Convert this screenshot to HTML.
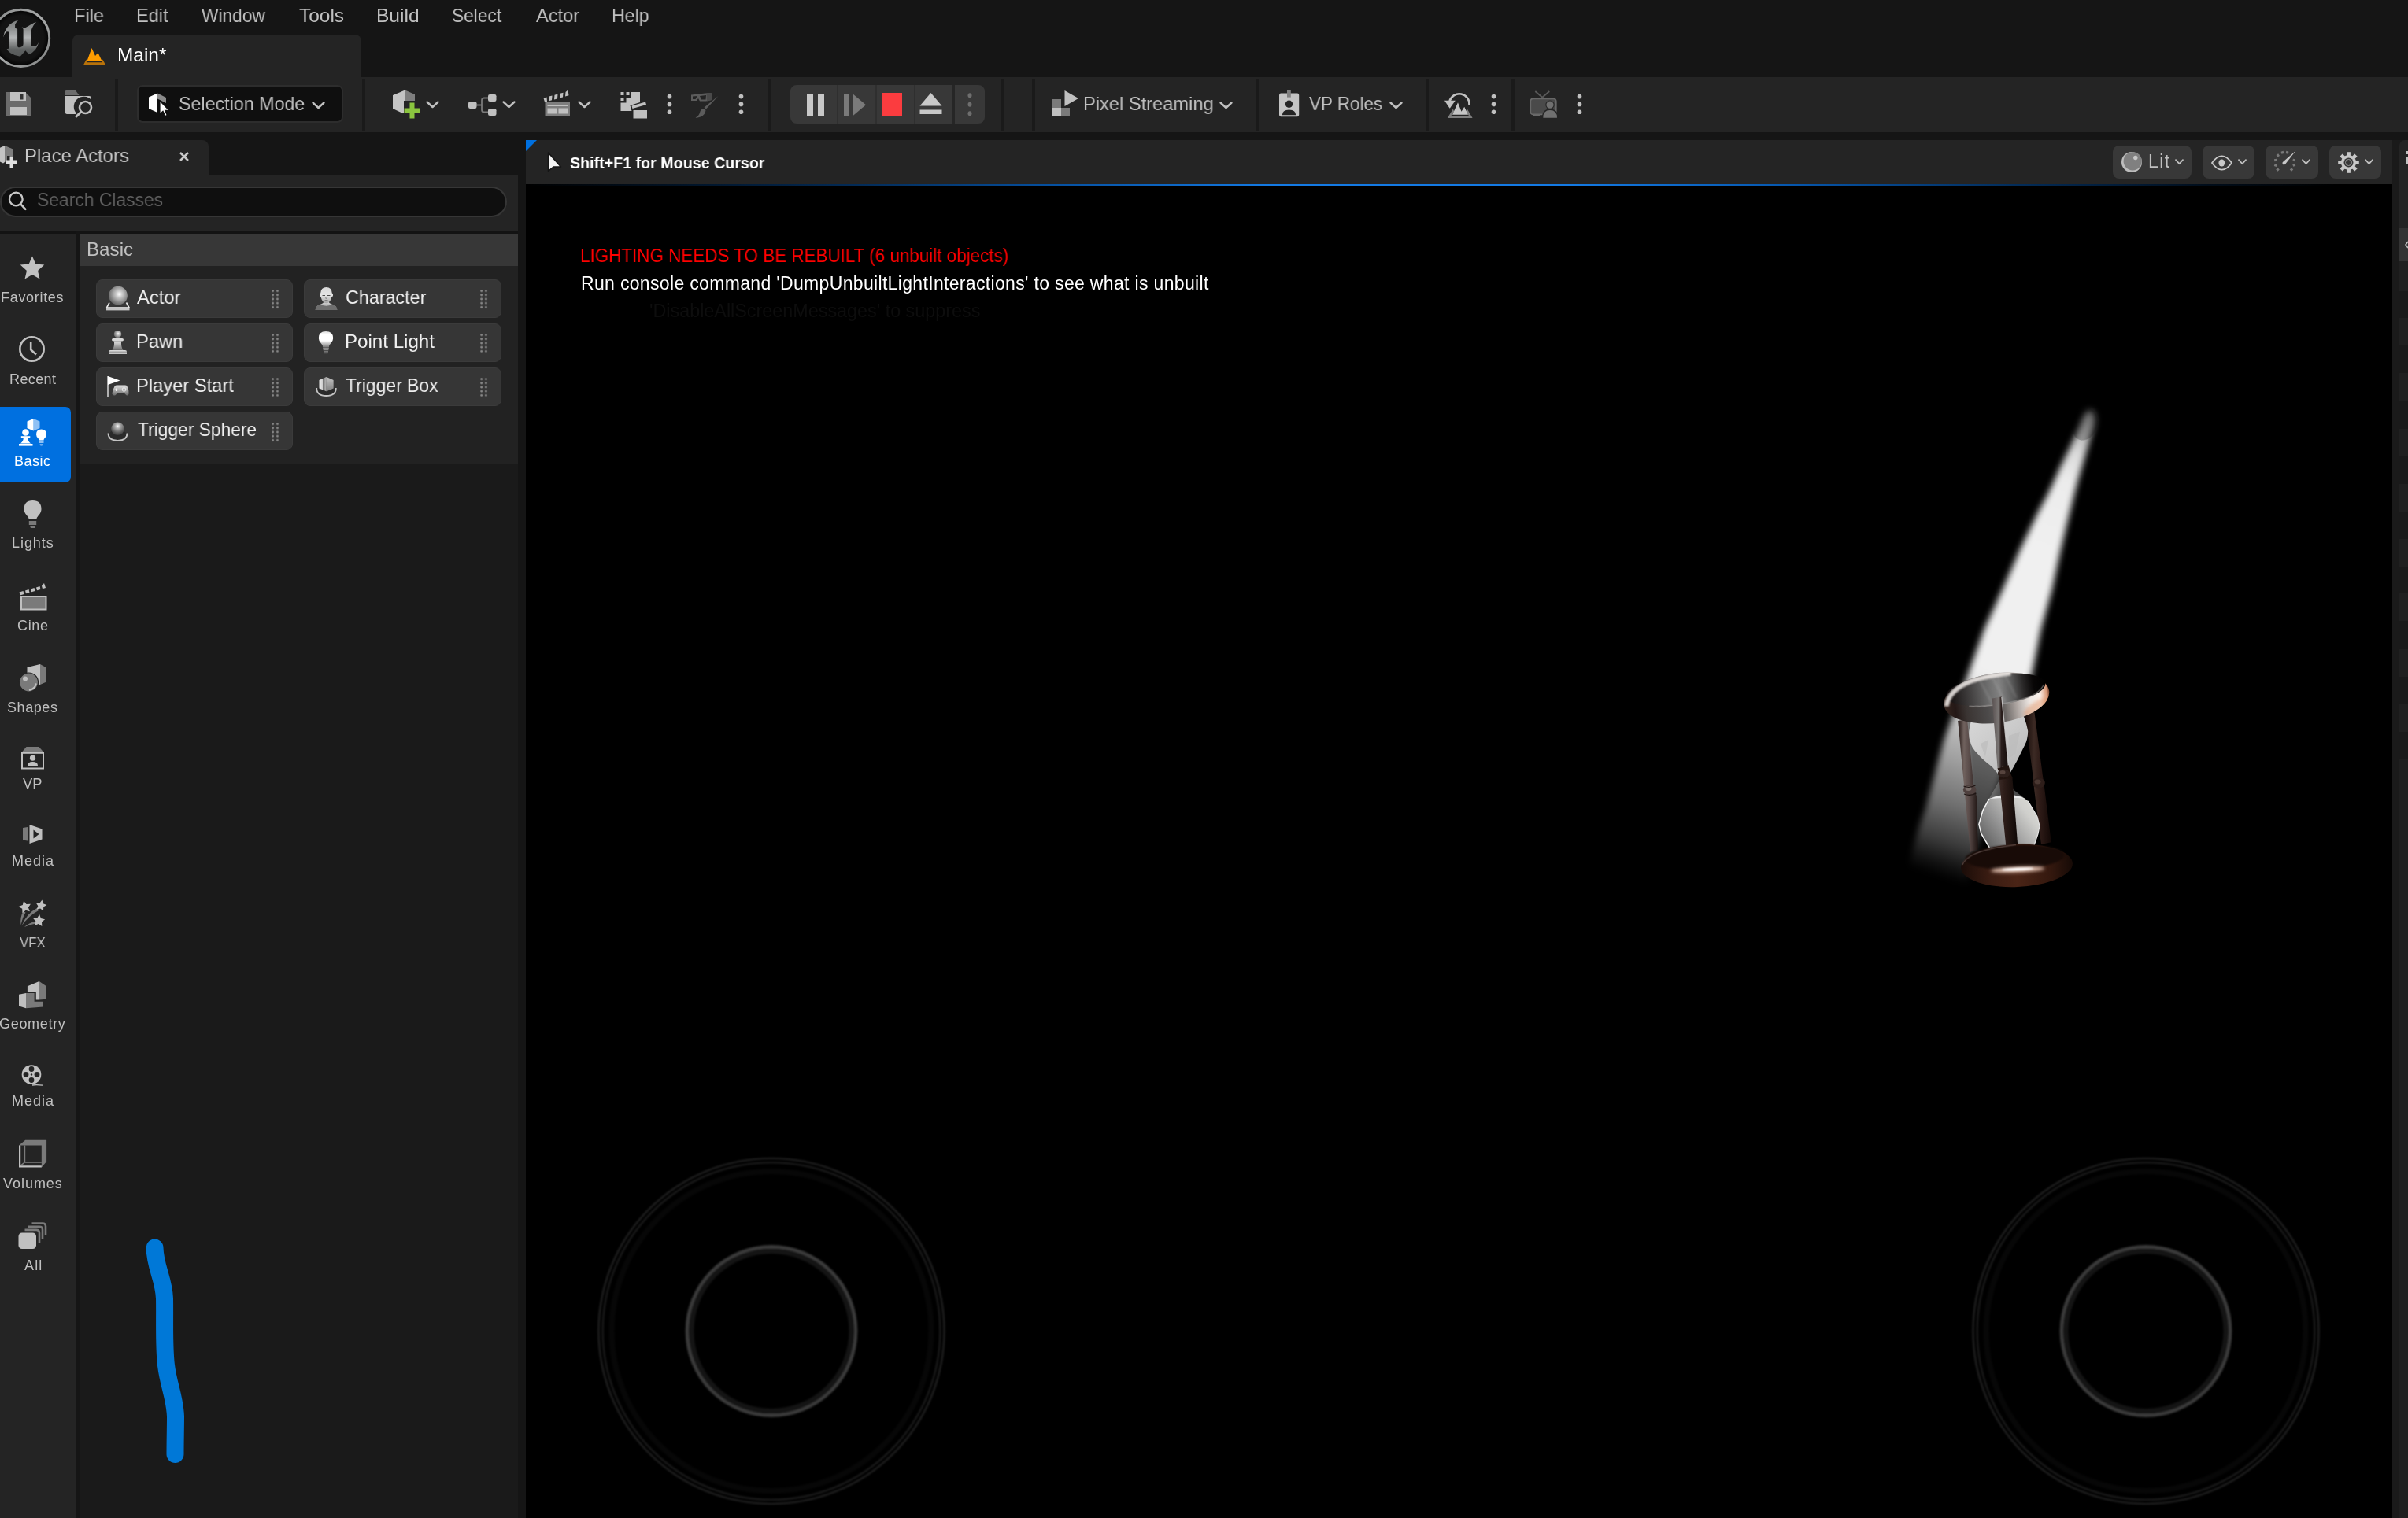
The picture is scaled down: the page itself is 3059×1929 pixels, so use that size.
<!DOCTYPE html>
<html>
<head>
<meta charset="utf-8">
<title>Unreal Editor</title>
<style>
*{box-sizing:border-box;margin:0;padding:0}
html,body{width:3059px;height:1929px;overflow:hidden;background:#151515}
body{position:relative;font-family:"Liberation Sans",sans-serif;color:#c0c0c0}
.a{position:absolute}
.t{position:absolute;white-space:nowrap;line-height:1;transform-origin:0 0;will-change:transform}
svg{position:absolute;overflow:visible;display:block}
.sep{position:absolute;width:4px;top:99.500px;height:66px;background:#1a1a1a}
.item{position:absolute;height:48.500px;background:#363636;border:1px solid #3b3b3b;border-radius:8px}
.grip{position:absolute;width:9.500px;height:26px;background:radial-gradient(circle at 1.600px 1.600px,#868686 .9px,rgba(134,134,134,0) 1.900px) 0 0/5.800px 5.200px}
.vb{position:absolute;top:185.300px;height:41.500px;background:#383838;border-radius:8px}
</style>
</head>
<body>
<!-- ===== top bar ===== -->
<div class="a" style="left:92px;top:44px;width:367px;height:60px;background:#242424;border-radius:8px 8px 0 0"></div>
<div class="a" style="left:0;top:98px;width:3059px;height:70px;background:#242424"></div>
<!-- UE logo -->
<svg style="left:0;top:0" width="100" height="100" viewBox="0 0 100 100">
 <defs><linearGradient id="lg1" gradientUnits="userSpaceOnUse" x1="0" y1="26" x2="0" y2="72"><stop offset="0" stop-color="#7c7e7e"/><stop offset=".25" stop-color="#909292"/><stop offset=".47" stop-color="#b2b4b5"/><stop offset=".62" stop-color="#8e9090"/><stop offset=".8" stop-color="#5e6161"/><stop offset="1" stop-color="#565959"/></linearGradient>
 <radialGradient id="rg0" gradientUnits="userSpaceOnUse" cx="26.600" cy="48.400" r="36"><stop offset="0" stop-color="#151515"/><stop offset=".8" stop-color="#131313"/><stop offset=".93" stop-color="#080808"/><stop offset="1" stop-color="#000"/></radialGradient>
 <linearGradient id="ring" x1="0" y1="0" x2="1" y2="1"><stop offset="0" stop-color="#8a8c8c"/><stop offset=".5" stop-color="#a8aaaa"/><stop offset="1" stop-color="#808282"/></linearGradient></defs>
 <circle cx="26.600" cy="48.400" r="36.100" fill="url(#rg0)" stroke="url(#ring)" stroke-width="2.900"/>
 <path d="M3.900 47.800 Q5.500 43 7.900 40.500 Q10.500 39.500 11.900 41.500 L11.900 61.600 L8.600 62.300 Q10.500 65.500 13.200 67.200 Q19 71 25.700 71.800 L32.300 64.200 L36.900 69.200 Q41.500 67 44.800 63.200 Q48 59 49.100 54 Q47.500 57 46.100 58 Q43.500 59.500 40.200 58.600 L39.500 57.500 L39.500 39.500 Q41 33 46.100 28 Q42.500 29 39.500 31 Q35.500 33.500 31.600 35.600 L27.700 34.600 Q29.600 36 29.600 37.500 L29.600 56 Q29.600 58.500 27.700 59.300 Q25 60.600 22.700 59.900 L22.100 58 L22.100 36.900 Q20.500 36.500 19.100 35.600 L19.100 31 Q20.500 28 23.100 26 Q19.500 26.500 16.500 28.300 Q11.500 31 8.600 35.600 Q5 41 3.900 47.800 Z" fill="url(#lg1)"/>
</svg>
<!-- main tab icon -->
<svg style="left:105px;top:60px" width="30" height="24" viewBox="0 0 30 24">
 <path d="M5.5 17.5 L11.5 1 L16 11 L19.5 7 L24.5 17.5 Z" fill="#ff9c00"/>
 <path d="M1 22.5 L4.5 15.5 L5.8 19.2 L24.2 19.2 L25.5 15.5 L29 22.5 Z" fill="#b8720a"/>
</svg>
<!-- save icon -->
<svg style="left:8px;top:117px" width="31" height="31" viewBox="0 0 31 31">
 <path d="M0 0 H24 L31 7 V31 H0 Z" fill="#6c6c6c"/>
 <rect x="5" y="0" width="20" height="11" fill="#c0c0c0"/>
 <rect x="17.5" y="2" width="4" height="7.5" fill="#333"/>
 <rect x="5" y="19" width="21" height="10" fill="#c0c0c0"/>
</svg>
<!-- content browser icon -->
<svg style="left:82px;top:114px" width="37" height="37" viewBox="0 0 37 37">
 <path d="M1 2 Q1 1 2 1 H14 L18.5 7 H1 Z" fill="#6c6c6c"/>
 <path d="M1 8 H31 Q34 8 34 11 V13 A11 11 0 0 0 15 30 V31 H3 Q1 31 1 29 Z" fill="#c0c0c0"/>
 <circle cx="26.5" cy="22.5" r="7.5" fill="none" stroke="#c0c0c0" stroke-width="2.6"/>
 <path d="M20.5 28.5 L15 34" stroke="#c0c0c0" stroke-width="3" stroke-linecap="round"/>
</svg>
<div class="sep" style="left:146px"></div>
<!-- selection mode -->
<div class="a" style="left:174px;top:108px;width:262px;height:48px;background:#0f0f0f;border:2px solid #2d2d2d;border-radius:7px"></div>
<svg style="left:188px;top:118px" width="28" height="30" viewBox="0 0 28 30">
 <path d="M12 0.5 L23 6 V13 L12 7.5 Z" fill="#8a8a8a"/>
 <path d="M12 0.5 L1 5.5 V20 L12 25 Z" fill="#ffffff"/>
 <path d="M15 10 V27 L19 23.2 L21.8 29.5 L24.3 28.4 L21.6 22.3 L26.6 22 Z" fill="#fff" stroke="#0f0f0f" stroke-width="1.2"/>
</svg>
<svg class="chev" style="left:396px;top:129px" width="17" height="10" viewBox="0 0 17 10"><path d="M1.5 1.5 L8.5 8 L15.5 1.5" fill="none" stroke="#c0c0c0" stroke-width="2.4" stroke-linecap="round" stroke-linejoin="round"/></svg>
<div class="sep" style="left:460px"></div>
<!-- ===== toolbar icons ===== -->
<!-- add cube -->
<svg style="left:498px;top:114px" width="37" height="37" viewBox="0 0 37 37">
 <path d="M16.5 0.5 L29 6 V20 L16.5 14 Z" fill="#7e7e7e"/>
 <path d="M16.5 0.5 L1 7 V24 L13.5 30 L16.5 28.5 Z" fill="#c4c4c4"/>
 <path d="M16.5 14 L29 20 L29 21 L16.5 28.5 Z" fill="#a0a0a0"/>
 <rect x="15" y="14" width="22" height="23" fill="#242424"/>
 <path d="M22.5 16.5 H28.5 V23.5 H35.5 V29.5 H28.5 V36.5 H22.5 V29.5 H15.5 V23.5 H22.5 Z" fill="#8bc53f"/>
</svg>
<svg style="left:541px;top:128px" width="17" height="10" viewBox="0 0 17 10"><path d="M1.5 1.5 L8.5 8 L15.5 1.5" fill="none" stroke="#c0c0c0" stroke-width="2.4" stroke-linecap="round" stroke-linejoin="round"/></svg>
<!-- blueprint nodes -->
<svg style="left:595px;top:120px" width="36" height="27" viewBox="0 0 36 27">
 <path d="M10 13.5 H17 M25 4.5 H20 Q17 4.5 17 7.5 V19.5 Q17 22.5 20 22.5 H25" fill="none" stroke="#7a7a7a" stroke-width="1.8"/>
 <rect x="0" y="9" width="10.5" height="9" rx="2.2" fill="#c0c0c0"/>
 <rect x="25" y="0" width="10.5" height="9" rx="2.2" fill="#c0c0c0"/>
 <rect x="25" y="18" width="10.5" height="9" rx="2.2" fill="#c0c0c0"/>
</svg>
<svg style="left:638px;top:128px" width="17" height="10" viewBox="0 0 17 10"><path d="M1.5 1.5 L8.5 8 L15.5 1.5" fill="none" stroke="#c0c0c0" stroke-width="2.4" stroke-linecap="round" stroke-linejoin="round"/></svg>
<!-- clapper -->
<svg style="left:690px;top:114px" width="36" height="35" viewBox="0 0 36 35">
 <rect x="2.5" y="16" width="31.5" height="18" fill="#7e7e7e"/>
 <rect x="5.5" y="19" width="25.5" height="2" fill="#c0c0c0"/>
 <rect x="5.5" y="23.5" width="12" height="7" fill="#c0c0c0"/>
 <rect x="19.5" y="23.5" width="11.5" height="7" fill="#c0c0c0"/>
 <g fill="#c0c0c0"><path d="M0.5 10.5 L4.5 9.4 L5 15 L2 15.8 Z"/><path d="M7.5 8.6 L11.5 7.5 L11 13.3 L7 14.4 Z"/><path d="M14.5 6.7 L18.5 5.6 L18 11.4 L14 12.5 Z"/><path d="M21.5 4.8 L25.5 3.7 L25 9.5 L21 10.6 Z"/><path d="M28.5 2.9 L31.5 0.5 L32.5 7.2 L28 8.6 Z"/></g>
</svg>
<svg style="left:734px;top:128px" width="17" height="10" viewBox="0 0 17 10"><path d="M1.5 1.5 L8.5 8 L15.5 1.5" fill="none" stroke="#c0c0c0" stroke-width="2.4" stroke-linecap="round" stroke-linejoin="round"/></svg>
<!-- build -->
<svg style="left:788px;top:116px" width="35" height="35" viewBox="0 0 35 35">
 <g fill="#c0c0c0"><rect x="0.5" y="1" width="4" height="4"/><rect x="7.5" y="1" width="4" height="4"/><rect x="0.5" y="8" width="4" height="4"/>
 <path d="M14 1 H25 V14 L12.5 18 L14.5 25 H0.500 V14.500 H7.500 V8 H14 Z"/>
 <path d="M14.500 18.500 L32 13.500 L33 17 L15.500 22 Z"/>
 <rect x="16.500" y="24" width="17.500" height="10.500"/></g>
</svg>

<svg style="left:846px;top:118px" width="9" height="29" viewBox="0 0 9 29"><g fill="#c0c0c0"><circle cx="4.5" cy="4.6" r="2.8"/><circle cx="4.5" cy="14.4" r="2.8"/><circle cx="4.5" cy="24.300" r="2.8"/></g></svg>
<!-- glasses + brush (disabled) -->
<svg style="left:877px;top:117px" width="37" height="34" viewBox="0 0 37 34">
 <path d="M1 3.500 L19 1.500 L26 1 Q27 1 27 3 V10 L20 11.500 L12 11.500 L10 8 L8 11 H1 Z M3 5.500 V9 H6.500 L8 6.500 L9 5 Z M12 5 L14 9.500 H19.500 L20 4 Z" fill="#5c5c5c" fill-rule="evenodd"/>
 <path d="M20.500 1.500 L26 1 Q27.500 1 27.500 3 V10 L21 11.500 Z" fill="#4a4a4a"/>
 <path d="M35.500 5 L20 21.500 L17.500 19.500 Z" fill="#5c5c5c"/>
 <path d="M17 21 L19.500 23 Q19 29 13 31.500 Q9 33 6.500 32.500 Q11 30 12 26 Q13 21.500 17 21 Z" fill="#5c5c5c"/>
</svg>
<svg style="left:937px;top:118px" width="9" height="29" viewBox="0 0 9 29"><g fill="#c0c0c0"><circle cx="4.5" cy="4.6" r="2.8"/><circle cx="4.5" cy="14.4" r="2.8"/><circle cx="4.5" cy="24.300" r="2.8"/></g></svg>
<div class="sep" style="left:976px"></div>
<!-- play group -->
<div class="a" style="left:1004px;top:108px;width:247px;height:49px;background:#383838;border-radius:8px;overflow:hidden">
 <div class="a" style="left:59px;top:0;width:1.5px;height:49px;background:#2f2f2f"></div>
 <div class="a" style="left:108px;top:0;width:1.5px;height:49px;background:#2f2f2f"></div>
 <div class="a" style="left:157px;top:0;width:1.5px;height:49px;background:#2f2f2f"></div>
 <div class="a" style="left:206px;top:0;width:3px;height:49px;background:#262626"></div>
 <div class="a" style="left:21px;top:10.500px;width:7.500px;height:28.500px;background:#c8c8c8"></div>
 <div class="a" style="left:35px;top:10.500px;width:7.500px;height:28.500px;background:#c8c8c8"></div>
 <div class="a" style="left:68px;top:10.500px;width:5.500px;height:28.500px;background:#7a7a7a"></div>
 <svg style="left:78.500px;top:10.500px" width="17" height="28.500" viewBox="0 0 17 28.500"><path d="M0 0 L17 14.250 L0 28.500 Z" fill="#7a7a7a"/></svg>
 <div class="a" style="left:117px;top:10px;width:25px;height:28.500px;background:#fb3c3f"></div>
 <svg style="left:164px;top:9.500px" width="29" height="28" viewBox="0 0 29 28"><path d="M14.500 0 L28.500 16.500 H0.500 Z" fill="#c8c8c8"/><rect x="0.500" y="21.500" width="28" height="5.500" fill="#c8c8c8"/></svg>
 <svg style="left:224px;top:9px" width="8" height="31" viewBox="0 0 8 31"><g fill="#6e6e6e"><ellipse cx="4" cy="4.300" rx="2.500" ry="3"/><ellipse cx="4" cy="15.700" rx="2.500" ry="3"/><ellipse cx="4" cy="27.200" rx="2.500" ry="3"/></g></svg>
</div>
<div class="sep" style="left:1272px"></div>
<div class="sep" style="left:1310.500px"></div>
<!-- pixel streaming icon -->
<svg style="left:1336px;top:114px" width="35" height="35" viewBox="0 0 35 35">
 <path d="M16.500 1 L34 11 L16.500 21 Z" fill="#c0c0c0"/>
 <rect x="1" y="12" width="11" height="11" fill="#7a7a7a"/>
 <rect x="1" y="23" width="11" height="11" fill="#c0c0c0"/>
 <rect x="12" y="23" width="11" height="11" fill="#7a7a7a"/>
</svg>
<svg style="left:1549px;top:129px" width="17" height="10" viewBox="0 0 17 10"><path d="M1.500 1.500 L8.500 8 L15.500 1.500" fill="none" stroke="#c0c0c0" stroke-width="2.400" stroke-linecap="round" stroke-linejoin="round"/></svg>
<div class="sep" style="left:1595px"></div>
<!-- VP roles icon -->
<svg style="left:1620px;top:110px" width="40" height="45" viewBox="1620 110 40 45">
 <rect x="1625" y="118.500" width="25.200" height="29.700" rx="2.200" fill="#c4c4c4"/>
 <rect x="1635" y="114.800" width="4.800" height="8.800" fill="#808080"/>
 <circle cx="1637.500" cy="132.300" r="4.700" fill="#242424"/>
 <path d="M1628.800 146.300 Q1629 139.600 1637.500 139.600 Q1646 139.600 1646.200 146.300 Z" fill="#242424"/>
</svg>
<svg style="left:1764.500px;top:129px" width="17" height="10" viewBox="0 0 17 10"><path d="M1.500 1.500 L8.500 8 L15.500 1.500" fill="none" stroke="#c0c0c0" stroke-width="2.400" stroke-linecap="round" stroke-linejoin="round"/></svg>
<div class="sep" style="left:1810.500px"></div>
<!-- recapture / landscape icon -->
<svg style="left:1830px;top:110px" width="45" height="45" viewBox="1830 110 45 45">
 <path d="M1841.500 128.500 A12.800 12.800 0 0 1 1866.500 133.500" fill="none" stroke="#c0c0c0" stroke-width="2.600"/>
 <path d="M1835 127.800 H1848.800 L1841.700 137.800 Z" fill="#c0c0c0"/>
 <path d="M1838.800 150 L1845.800 138.500 L1847.200 141.500 L1843.300 147.300 H1866 L1862.500 141.500 L1864 138.800 L1870.600 150 Z" fill="#7e7e7e"/>
 <path d="M1845 145.800 L1852 130.300 L1856.500 141.800 L1860.200 135.800 L1865 145.800 Z" fill="#c4c4c4"/>
</svg>
<svg style="left:1893px;top:118px" width="9" height="29" viewBox="0 0 9 29"><g fill="#c0c0c0"><circle cx="4.500" cy="4.600" r="2.800"/><circle cx="4.500" cy="14.400" r="2.800"/><circle cx="4.500" cy="24.300" r="2.800"/></g></svg>
<div class="sep" style="left:1919.500px"></div>
<!-- tv icon disabled -->
<svg style="left:1940px;top:110px" width="45" height="45" viewBox="1940 110 45 45">
 <path d="M1950.300 116 L1959.300 123.800 L1968.300 116" fill="none" stroke="#5a5a5a" stroke-width="1.800"/>
 <rect x="1944.200" y="125.200" width="32.500" height="20.200" rx="3.500" fill="#4a4a4a" stroke="#686868" stroke-width="1.900"/>
 <rect x="1947" y="146" width="9" height="1.600" fill="#686868"/>
 <circle cx="1969" cy="133.200" r="5.700" fill="#242424"/>
 <path d="M1958.700 151 Q1958.700 138.600 1969 138.600 Q1979.500 138.600 1979.500 151 Z" fill="#242424"/>
 <circle cx="1969" cy="133.200" r="4.600" fill="#707070"/>
 <path d="M1960.300 149.800 Q1960.300 140 1969 140 Q1978 140 1978 149.800 Z" fill="#707070"/>
</svg>
<svg style="left:2001.500px;top:118px" width="9" height="29" viewBox="0 0 9 29"><g fill="#c0c0c0"><circle cx="4.500" cy="4.600" r="2.800"/><circle cx="4.500" cy="14.400" r="2.800"/><circle cx="4.500" cy="24.300" r="2.800"/></g></svg>
<!-- ===== left panel ===== -->
<div class="a" style="left:0;top:178px;width:265px;height:44px;background:#242424;border-radius:0 8px 0 0"></div>
<div class="a" style="left:0;top:223px;width:658px;height:1706px;background:#242424"></div>
<div class="a" style="left:658px;top:178px;width:10px;height:1751px;background:#151515"></div>
<!-- tab icon -->
<svg style="left:-4px;top:185px" width="27" height="29" viewBox="0 0 27 29">
 <path d="M10 0 L20.500 4.500 V13 H13 V19 L10 21 Z" fill="#7e7e7e"/>
 <path d="M10 0 L0 4.500 V18.500 L8 22.500 L10 21 Z" fill="#c4c4c4"/>
 <path d="M16.500 13.500 H21 V18.500 H26 V23 H21 V28 H16.500 V23 H11.500 V18.500 H16.500 Z" fill="#e0e0e0"/>
</svg>
<!-- close x -->
<svg style="left:228px;top:192.500px" width="12" height="12" viewBox="0 0 12 12"><path d="M1 1 L11 11 M11 1 L1 11" stroke="#c8c8c8" stroke-width="2.500" fill="none"/></svg>
<!-- search box -->
<div class="a" style="left:0;top:237px;width:644px;height:38.500px;background:#0f0f0f;border:2px solid #363636;border-radius:19.500px"></div>
<svg style="left:9px;top:242px" width="26" height="26" viewBox="0 0 26 26"><circle cx="11.300" cy="11" r="8.300" fill="none" stroke="#c8c8c8" stroke-width="2.300"/><path d="M17.300 17.300 L23.300 23.800" stroke="#c8c8c8" stroke-width="2.500" stroke-linecap="round"/></svg>
<!-- category column + recessed content -->
<div class="a" style="left:0;top:293px;width:658px;height:4px;background:#131313"></div>
<div class="a" style="left:97px;top:293px;width:4px;height:1636px;background:#151515"></div>
<div class="a" style="left:101px;top:297px;width:557px;height:1632px;background:#1a1a1a"></div>
<div class="a" style="left:101px;top:297px;width:557px;height:41px;background:#373737"></div>
<div class="a" style="left:101px;top:338px;width:557px;height:252px;background:#222222"></div>
<!-- basic selected -->
<div class="a" style="left:-6px;top:516.500px;width:95.500px;height:96px;background:#0070e0;border-radius:7px"></div>
<div class="item" style="left:122px;top:355px;width:250px"></div>
<div class="grip" style="left:345.2px;top:368.3px"></div>
<div class="item" style="left:122px;top:411px;width:250px"></div>
<div class="grip" style="left:345.2px;top:424.3px"></div>
<div class="item" style="left:122px;top:467px;width:250px"></div>
<div class="grip" style="left:345.2px;top:480.3px"></div>
<div class="item" style="left:122px;top:523px;width:250px"></div>
<div class="grip" style="left:345.2px;top:536.8px"></div>
<div class="item" style="left:386px;top:355px;width:251px"></div>
<div class="grip" style="left:610.1px;top:368.3px"></div>
<div class="item" style="left:386px;top:411px;width:251px"></div>
<div class="grip" style="left:610.1px;top:424.3px"></div>
<div class="item" style="left:386px;top:467px;width:251px"></div>
<div class="grip" style="left:610.1px;top:480.3px"></div>
<!-- ===== item icons ===== -->
<svg width="0" height="0"><defs>
 <radialGradient id="sph" cx=".56" cy=".42" r=".62"><stop offset="0" stop-color="#ffffff"/><stop offset=".25" stop-color="#cfcfcf"/><stop offset=".7" stop-color="#8a8a8a"/><stop offset="1" stop-color="#5c5c5c"/></radialGradient>
 <radialGradient id="sph2" cx=".5" cy=".3" r=".7"><stop offset="0" stop-color="#f4f4f4"/><stop offset=".3" stop-color="#a8a8a8"/><stop offset=".75" stop-color="#5a5a5a"/><stop offset="1" stop-color="#3c3c3c"/></radialGradient>
 <linearGradient id="gv" x1="0" y1="0" x2="0" y2="1"><stop offset="0" stop-color="#e6e6e6"/><stop offset="1" stop-color="#6a6a6a"/></linearGradient>
 <linearGradient id="gface" x1="0" y1="0" x2="0" y2="1"><stop offset="0" stop-color="#d8d8d8"/><stop offset=".5" stop-color="#e4e4e4"/><stop offset="1" stop-color="#a4a4a4"/></linearGradient>
 <linearGradient id="gbulb" x1="0" y1="0" x2="0" y2="1"><stop offset="0" stop-color="#d8d8d8"/><stop offset=".18" stop-color="#ffffff"/><stop offset=".6" stop-color="#ffffff"/><stop offset="1" stop-color="#7a7a7a"/></linearGradient>
 <linearGradient id="gh" x1="0" y1="0" x2="1" y2="0"><stop offset="0" stop-color="#f0f0f0"/><stop offset=".45" stop-color="#d0d0d0"/><stop offset=".55" stop-color="#7a7a7a"/><stop offset="1" stop-color="#b8b8b8"/></linearGradient>
</defs></svg>
<!-- actor -->
<svg style="left:134px;top:363px" width="32" height="33" viewBox="0 0 32 33">
 <path d="M5 21.500 L1.500 28 M26.500 21.500 L30 28" stroke="#e8e8e8" stroke-width="1.600" fill="none"/>
 <rect x="1" y="27.400" width="29.500" height="4" fill="#c4c4c4"/>
 <rect x="1" y="27.400" width="29.500" height="1.200" fill="#ededed"/>
 <circle cx="16" cy="12.700" r="11.900" fill="url(#sph)"/>
</svg>
<!-- pawn -->
<svg style="left:137px;top:419px" width="26" height="33" viewBox="0 0 26 33">
 <path d="M8 14.500 H17 Q16.500 22 19.500 26 H5.500 Q8.500 22 8 14.500 Z" fill="url(#gv)"/>
 <rect x="5" y="11" width="15" height="3.600" rx="1.800" fill="#d8d8d8"/>
 <circle cx="12.500" cy="5.700" r="4.800" fill="url(#sph)"/>
 <path d="M3 26 H22 Q24 26 24 28 V30.500 H1 V28 Q1 26 3 26 Z" fill="url(#gv)"/>
 <rect x="1" y="29" width="23" height="2" fill="#c8c8c8"/>
</svg>
<!-- player start -->
<svg style="left:135px;top:477px" width="30" height="29" viewBox="0 0 30 29">
 <rect x="1" y="1" width="2" height="27" fill="#b0b0b0"/>
 <path d="M2 1 L17.500 6.500 L2 12 Z" fill="#ffffff"/>
 <path d="M10.500 14 Q12 12.200 14.500 12.600 H23 Q25.500 12.200 26.500 14 Q29 19 28.500 23.500 Q28 26.300 25.500 25.200 L22.500 22.200 H14.500 L11.500 25.200 Q8.500 26.300 7.500 23.500 Q7.500 19 10.500 14 Z" fill="url(#gv)"/>
 <path d="M12.500 16.500 V20 M10.800 18.200 H14.300" stroke="#f4f4f4" stroke-width="1" fill="none"/>
 <circle cx="22.500" cy="18" r="2.300" fill="none" stroke="#efefef" stroke-width=".9"/>
</svg>
<!-- trigger sphere -->
<svg style="left:136px;top:535px" width="28" height="27" viewBox="0 0 28 27">
 <ellipse cx="13.500" cy="17.500" rx="11.300" ry="6.500" fill="#2a2a2a"/>
 <path d="M1.500 15.500 Q1.500 24.800 13.500 24.800 Q25.500 24.800 25.500 15.500" fill="none" stroke="#c4c4c4" stroke-width="1.800"/>
 <circle cx="13.500" cy="9.800" r="8.300" fill="url(#sph2)"/>
</svg>
<!-- character -->
<svg style="left:399px;top:364px" width="31" height="31" viewBox="0 0 31 31">
 <path d="M1.500 30 Q2 24.500 8 22.800 Q12 21.500 12.500 19 H18.500 Q19 21.500 23 22.800 Q29 24.500 29.500 30 Z" fill="url(#gv)"/>
 <path d="M1.500 30 Q2 24.500 8 22.800 Q15.500 27 23 22.800 Q29 24.500 29.500 30 Z" fill="#6e6e6e"/>
 <path d="M15.500 1 Q22.500 1 22.800 8.500 Q24.500 9 24 11.500 Q23.600 13.500 22.300 13.800 Q21.500 18 19 20 Q15.500 22.500 12 20 Q9.500 18 8.700 13.800 Q7.400 13.500 7 11.500 Q6.500 9 8.200 8.500 Q8.500 1 15.500 1 Z" fill="url(#gface)"/>
 
 <path d="M10.500 11.500 H14 M17 11.500 H20.500" stroke="#4a4a4a" stroke-width="1.200"/>
 <path d="M13.500 17.800 H17.500" stroke="#5a5a5a" stroke-width=".9"/><path d="M15 13 L14.800 15.300 H16.300" stroke="#6a6a6a" stroke-width=".7" fill="none"/>
</svg>
<!-- point light -->
<svg style="left:404px;top:420px" width="21" height="30" viewBox="0 0 21 30">
 <path d="M10 1 Q19.200 1 19.200 9.700 Q19.200 13.500 16 16.500 Q14 18.500 14 21 H6 Q6 18.500 4 16.500 Q0.800 13.500 0.800 9.700 Q0.800 1 10 1 Z" fill="url(#gbulb)"/>
 <path d="M6.200 22.300 H13.800 M6.600 24.600 H13.400 M7 26.900 H13" stroke="#8a8a8a" stroke-width="1.400"/>
 <path d="M7.500 28.700 H12.500" stroke="#5a5a5a" stroke-width="1.300"/>
</svg>
<!-- trigger box -->
<svg style="left:401px;top:478px" width="28" height="27" viewBox="0 0 28 27">
 <ellipse cx="13.500" cy="17.800" rx="11.500" ry="6.300" fill="#2a2a2a"/>
 <path d="M1.200 15 Q1.200 25 13.500 25 Q25.800 25 25.800 15" fill="none" stroke="#c4c4c4" stroke-width="1.800"/>
 <path d="M13.500 1 L22.500 5 V15.500 L13.500 19.200 Z" fill="#9a9a9a"/>
 <path d="M13.500 1 L4.500 5 V15.500 L13.500 19.200 Z" fill="url(#gh)"/>
 <path d="M13.500 1 L22.500 5 V15.500 L13.500 19.200 Z" fill="url(#gv)" opacity=".55"/>
</svg>
<!-- ===== category icons ===== -->
<!-- star -->
<svg style="left:24.500px;top:324.500px" width="32" height="30" viewBox="0 0 32 30"><path d="M16 0.500 L20.300 10.500 L31.300 11.600 L23 18.900 L25.500 29.500 L16 24 L6.500 29.500 L9 18.900 L0.700 11.600 L11.700 10.500 Z" fill="#c0c0c0"/></svg>
<!-- clock -->
<svg style="left:23px;top:426px" width="35" height="35" viewBox="0 0 35 35"><circle cx="17.500" cy="17.500" r="15.200" fill="none" stroke="#c0c0c0" stroke-width="2.600"/><path d="M16.200 8.500 V18.500 L23 24.500" fill="none" stroke="#c0c0c0" stroke-width="2.600"/></svg>
<!-- basic (selected) -->
<svg style="left:23px;top:531px" width="37" height="37" viewBox="0 0 37 37">
 <path d="M19.500 1 L27.500 4.500 V13 L19.500 16.500 Z" fill="#8ec0f4"/>
 <path d="M19.500 1 L11.500 4.500 V13 L19.500 16.500 Z" fill="#ffffff"/>
 <circle cx="9.500" cy="18.500" r="4.300" fill="#fff"/>
 <rect x="3.800" y="23.200" width="11.500" height="1.800" fill="#fff"/>
 <path d="M6.800 25.800 H12.200 Q12.400 30 16 32.500 H3 Q6.600 30 6.800 25.800 Z" fill="#fff"/>
 <rect x="1" y="33" width="17.500" height="2.600" fill="#fff"/>
 <path d="M29.500 14.500 Q36 14.500 36 21 Q36 23.800 33.500 26 Q32.500 27 32.500 28.500 H26.500 Q26.500 27 25.500 26 Q23 23.800 23 21 Q23 14.500 29.500 14.500 Z" fill="#fff"/>
 <path d="M26.500 30 H32.500 V32 H26.500 Z M27.500 33.200 H31.500 L30.500 35.500 H28.500 Z" fill="#8ec0f4"/>
</svg>
<!-- lights -->
<svg style="left:30px;top:635px" width="24" height="37" viewBox="0 0 24 37">
 <path d="M11.500 1 Q22.500 1 22.500 12 Q22.500 16.500 18.500 20.500 Q16.500 22.500 16.500 25 H6.500 Q6.500 22.500 4.500 20.500 Q0.500 16.500 0.500 12 Q0.500 1 11.500 1 Z" fill="#c0c0c0"/>
 <rect x="6.800" y="27" width="9.400" height="5" fill="#7a7a7a"/>
 <path d="M8 33.500 H15 L14 36 H9 Z" fill="#7a7a7a"/>
</svg>
<!-- cine -->
<svg style="left:24px;top:740px" width="36" height="36" viewBox="0 0 36 36">
 <rect x="3" y="18" width="31.500" height="16.500" fill="#7a7a7a" stroke="#c0c0c0" stroke-width="2"/>
 <g fill="#c0c0c0"><path d="M0.500 12.500 L5.500 11.100 L6.500 15 L1.500 16.500 Z"/><path d="M8 10.400 L12.500 9.100 L13.500 13 L9 14.300 Z"/><path d="M15 8.400 L19.500 7.100 L20.500 11 L16 12.300 Z"/><path d="M22 6.400 L26.500 5.100 L27.500 9 L23 10.300 Z"/><path d="M29 4.400 L32 1 L34 7.100 L30 8.300 Z"/></g>
</svg>
<!-- shapes -->
<svg style="left:24px;top:843px" width="36" height="37" viewBox="0 0 36 37">
 <path d="M10.500 5 L27 1 V27 L10.500 24 Z" fill="#c0c0c0"/>
 <path d="M27 1 L35 5.500 V23.500 L27 27 Z" fill="#7a7a7a"/>
 <circle cx="12.500" cy="24" r="12" fill="#7a7a7a" stroke="#242424" stroke-width="1.200"/>
 <circle cx="8" cy="19.500" r="3" fill="#c0c0c0"/>
 <path d="M22 25.500 Q20.500 32.500 13 34" fill="none" stroke="#c0c0c0" stroke-width="1.800"/>
</svg>
<!-- VP -->
<svg style="left:26px;top:948px" width="31" height="30" viewBox="0 0 31 30">
 <path d="M7.500 1 H23.500 L29.500 8 H1.500 Z" fill="#7a7a7a"/>
 <rect x="2" y="8.800" width="27" height="19.700" fill="none" stroke="#c0c0c0" stroke-width="2"/>
 <circle cx="15.500" cy="15.200" r="3.600" fill="#c0c0c0"/>
 <path d="M9 25 Q9 20 15.500 20 Q22 20 22 25 Z" fill="#c0c0c0"/>
</svg>
<!-- media (play) -->
<svg style="left:28px;top:1047px" width="27" height="26" viewBox="0 0 27 26">
 <path d="M1 5 L7 4 V21.500 L1 20.500 Z" fill="#7a7a7a"/>
 <path d="M9.500 1 L25.500 6.500 V19.500 L9.500 25 Z M14.500 7.500 V18.500 L21.500 13 Z" fill="#c0c0c0" fill-rule="evenodd"/>
</svg>
<!-- VFX -->
<svg style="left:0;top:1130px" width="97" height="60" viewBox="0 1130 97 60">
 <path d="M29.500 1158 Q25 1166 26.600 1175.500 Q28.500 1166 32.500 1159.500 Z" fill="#7a7a7a"/>
 <path d="M47 1154 Q33.500 1161 27.500 1176.500 Q36 1164 49 1157 Z" fill="#7a7a7a"/>
 <path d="M44.500 1171 Q37 1172.500 31 1178 Q38 1174.800 45.500 1173.500 Z" fill="#7a7a7a"/>
 <path d="M30.1 1144.8 L33.5 1149.1 L38.9 1148.7 L35.9 1153.2 L37.9 1158.3 L32.7 1156.8 L28.5 1160.3 L28.2 1154.8 L23.6 1151.9 L28.8 1150.1 Z" fill="#c0c0c0"/>
 <path d="M53.5 1143.6 L54.7 1148.3 L59.4 1150.0 L55.2 1152.6 L55.0 1157.6 L51.2 1154.4 L46.5 1155.8 L48.3 1151.2 L45.6 1147.1 L50.5 1147.4 Z" fill="#c0c0c0"/>
 <path d="M50.1 1162.0 L52.0 1167.0 L57.1 1168.3 L53.0 1171.6 L53.3 1176.9 L48.9 1174.0 L43.9 1175.9 L45.4 1170.8 L42.0 1166.7 L47.3 1166.5 Z" fill="#c0c0c0"/>
</svg>
<!-- geometry -->
<svg style="left:0;top:1240px" width="97" height="50" viewBox="0 1240 97 50">
 <path d="M34.900 1253.200 L49.800 1247 L49.800 1270.500 L45.800 1270.500 L45.800 1260.500 L34.900 1260.500 Z" fill="#c0c0c0"/>
 <path d="M49.800 1247 L58.900 1253.200 L58.900 1269.800 L49.800 1270.500 Z" fill="#7a7a7a"/>
 <path d="M24 1263.800 L33 1262.100 L33 1281.200 L24 1278.400 Z" fill="#c0c0c0"/>
 <path d="M33 1262.100 L43.600 1262.100 L43.600 1272.800 L54.800 1272.800 L54.800 1279.500 L33 1281.200 Z" fill="#7a7a7a"/>
</svg>
<!-- media (reel) -->
<svg style="left:27px;top:1352px" width="28" height="29" viewBox="0 0 28 29">
 <circle cx="13" cy="13.500" r="12.300" fill="#c0c0c0"/>
 <g fill="#242424"><circle cx="13" cy="6.500" r="3.400"/><circle cx="13" cy="20.500" r="3.400"/><circle cx="6" cy="13.500" r="3.400"/><circle cx="20" cy="13.500" r="3.400"/><circle cx="13" cy="13.500" r="1.200"/></g>
 <path d="M14 27 Q20 26.200 27 27.200" stroke="#c0c0c0" stroke-width="1.300" fill="none"/>
</svg>
<!-- volumes -->
<svg style="left:0;top:1440px" width="97" height="50" viewBox="0 1440 97 50">
 <path d="M24 1455.500 L32.200 1448.700 L59.100 1448.700 L59.100 1476 L52.800 1483.400 L52.800 1455.500 Z" fill="#7a7a7a"/>
 <path d="M31.400 1455.500 V1477 H52.800 M31.400 1477 L26.200 1481.200" fill="none" stroke="#7a7a7a" stroke-width="1.600"/>
 <path d="M25.100 1455.500 V1482.300 H52.800" fill="none" stroke="#c0c0c0" stroke-width="2.200"/>
</svg>
<!-- all -->
<svg style="left:23px;top:1553px" width="37" height="35" viewBox="0 0 37 35">
 <g fill="none" stroke="#7a7a7a" stroke-width="2.600"><path d="M17.500 1.500 H31 Q35 1.500 35 5.500 V17"/><path d="M13 5.700 H27 Q31 5.700 31 9.700 V22"/><path d="M8.500 9.900 H23 Q27 9.900 27 13.900 V27"/></g>
 <rect x="0.500" y="13.500" width="22.500" height="20.500" rx="4.500" fill="#c0c0c0"/>
</svg>
<!-- blue scribble -->
<svg style="left:0;top:0" width="400" height="1929" viewBox="0 0 400 1929"><path d="M196.500 1585.500 C197 1610 208 1625 209 1650 C209.500 1680 208 1710 211 1735 C214 1760 222 1775 223 1800 C223 1815 222.500 1830 222.500 1848" fill="none" stroke="#0078d7" stroke-width="22" stroke-linecap="round" stroke-linejoin="round"/></svg>
<!-- ===== viewport ===== -->
<div class="a" style="left:668px;top:178px;width:2371px;height:56px;background:#242424"></div>
<div class="a" style="left:668px;top:234px;width:2371px;height:1695px;background:#000"></div>
<div class="a" style="left:668px;top:233.500px;width:2371px;height:2.500px;background:linear-gradient(90deg,rgba(8,110,220,0) 0%,rgba(8,110,220,.16) 8%,rgba(8,110,220,.4) 18%,rgba(8,110,220,.72) 28%,rgba(20,122,228,1) 40%,rgba(20,122,228,1) 56%,rgba(8,110,220,.78) 68%,rgba(8,110,220,.4) 80%,rgba(8,110,220,.12) 90%,rgba(8,110,220,0) 97%),#000"></div>
<svg style="left:668px;top:178px" width="14" height="14" viewBox="0 0 14 14"><path d="M0 0 H14 L0 14 Z" fill="#0070e0"/></svg>
<!-- cursor icon -->
<svg style="left:694px;top:192px" width="22" height="29" viewBox="0 0 22 29">
 <path d="M2.500 2 V25.500 L9 20 H18.500 Z" fill="#f4f4f4" stroke="#151515" stroke-width="1.600" stroke-linejoin="round"/>
</svg>
<!-- viewport buttons -->
<div class="vb" style="left:2683.500px;width:100px"></div>
<div class="vb" style="left:2798.300px;width:65.500px"></div>
<div class="vb" style="left:2878.300px;width:66.300px"></div>
<div class="vb" style="left:2959.300px;width:65.800px"></div>
<!-- lit sphere -->
<svg style="left:2694px;top:192px" width="28" height="28" viewBox="0 0 28 28">
 <circle cx="14" cy="14" r="13" fill="#bdbdbd"/>
 <circle cx="15.200" cy="12.800" r="11.600" fill="#808080"/>
 <circle cx="18.800" cy="8.500" r="2.700" fill="#c8c8c8"/>
</svg>
<svg style="left:2763px;top:202px" width="11" height="8" viewBox="0 0 11 8"><path d="M1 1.200 L5.500 6.200 L10 1.200" fill="none" stroke="#c0c0c0" stroke-width="1.800" stroke-linecap="round" stroke-linejoin="round"/></svg>
<!-- eye -->
<svg style="left:2809px;top:197px" width="27" height="20" viewBox="0 0 27 20">
 <path d="M1 10 Q7 1.300 13.500 1.300 Q20 1.300 26 10 Q20 18.700 13.500 18.700 Q7 18.700 1 10 Z" fill="none" stroke="#c8c8c8" stroke-width="1.800"/>
 <ellipse cx="13.300" cy="10" rx="3.900" ry="4.500" fill="#c8c8c8"/>
</svg>
<svg style="left:2843px;top:202px" width="11" height="8" viewBox="0 0 11 8"><path d="M1 1.200 L5.500 6.200 L10 1.200" fill="none" stroke="#c0c0c0" stroke-width="1.800" stroke-linecap="round" stroke-linejoin="round"/></svg>
<!-- speed -->
<svg style="left:2888px;top:191px" width="31" height="27" viewBox="0 0 31 27">
 <g fill="#7a7a7a"><rect x="-1.600" y="-1.600" width="3.200" height="3.200" transform="translate(5.500 24.500) rotate(45)"/><rect x="-1.600" y="-1.600" width="3.200" height="3.200" transform="translate(2.800 19) rotate(20)"/><rect x="-1.600" y="-1.600" width="3.200" height="3.200" transform="translate(2.800 12.500) rotate(-10)"/><rect x="-1.600" y="-1.600" width="3.200" height="3.200" transform="translate(5.800 6.500) rotate(-35)"/><rect x="-1.600" y="-1.600" width="3.200" height="3.200" transform="translate(11.500 2.800) rotate(-15)"/><rect x="-1.600" y="-1.600" width="3.200" height="3.200" transform="translate(17.500 2.800) rotate(15)"/><rect x="-1.600" y="-1.600" width="3.200" height="3.200" transform="translate(26.200 12.500) rotate(10)"/><rect x="-1.600" y="-1.600" width="3.200" height="3.200" transform="translate(26.200 18.800) rotate(-20)"/><rect x="-1.600" y="-1.600" width="3.200" height="3.200" transform="translate(23 24.500) rotate(45)"/></g>
 <path d="M28.500 0.500 L15 17.800 Q12.800 19 11.700 17.400 Q10.800 15.800 12.400 14.500 Z" fill="#c8c8c8"/>
</svg>
<svg style="left:2924px;top:202px" width="11" height="8" viewBox="0 0 11 8"><path d="M1 1.200 L5.500 6.200 L10 1.200" fill="none" stroke="#c0c0c0" stroke-width="1.800" stroke-linecap="round" stroke-linejoin="round"/></svg>
<!-- gear -->
<svg style="left:2969.500px;top:192.500px" width="27" height="27" viewBox="-13.500 -13.500 27 27">
 <g fill="#c8c8c8"><rect x="-2.400" y="-13.300" width="4.800" height="26.600"/><rect x="-2.400" y="-13.300" width="4.800" height="26.600" transform="rotate(45)"/><rect x="-2.400" y="-13.300" width="4.800" height="26.600" transform="rotate(90)"/><rect x="-2.400" y="-13.300" width="4.800" height="26.600" transform="rotate(135)"/><circle r="9.600"/></g>
 <circle r="6" fill="#383838"/><circle r="4" fill="none" stroke="#9a9a9a" stroke-width="1"/>
 <circle r="6.600" fill="none" stroke="#383838" stroke-width="0"/>
</svg>
<svg style="left:3004px;top:202px" width="11" height="8" viewBox="0 0 11 8"><path d="M1 1.200 L5.500 6.200 L10 1.200" fill="none" stroke="#c0c0c0" stroke-width="1.800" stroke-linecap="round" stroke-linejoin="round"/></svg>
<!-- right sliver panel -->
<div class="a" style="left:3039px;top:178px;width:20px;height:1751px;background:#1a1a1a"></div>
<div class="a" style="left:3048px;top:178px;width:11px;height:44px;background:#242424;border-radius:7px 0 0 0"></div>
<div class="a" style="left:3048px;top:223px;width:11px;height:67px;background:#242424"></div>
<div class="a" style="left:3048px;top:290px;width:11px;height:42px;background:#333333"></div>
<div class="a" style="left:3048px;top:332px;width:11px;height:38px;background:#202020"></div>
<div class="a" style="left:3048px;top:404px;width:11px;height:34.8px;background:#202020"></div>
<div class="a" style="left:3048px;top:474.2px;width:11px;height:34.8px;background:#202020"></div>
<div class="a" style="left:3048px;top:544.7px;width:11px;height:35.3px;background:#202020"></div>
<div class="a" style="left:3048px;top:615px;width:11px;height:34.5px;background:#202020"></div>
<div class="a" style="left:3048px;top:685px;width:11px;height:34.9px;background:#202020"></div>
<div class="a" style="left:3048px;top:754.4px;width:11px;height:34.6px;background:#202020"></div>
<div class="a" style="left:3048px;top:824.5px;width:11px;height:35.1px;background:#202020"></div>
<div class="a" style="left:3048px;top:895px;width:11px;height:34.6px;background:#202020"></div>
<div class="a" style="left:3048px;top:964px;width:11px;height:965px;background:#1f1f1f"></div>
<div class="a" style="left:3056px;top:192px;width:3px;height:4px;background:#c0c0c0"></div>
<div class="a" style="left:3056px;top:199px;width:3px;height:10px;background:#c0c0c0"></div>
<svg style="left:3055px;top:306px" width="4" height="10" viewBox="0 0 4 10"><path d="M4 1 L1 5 L4 9" fill="none" stroke="#c0c0c0" stroke-width="1.600"/></svg>
<!-- joysticks -->
<svg style="left:668px;top:1400px" width="2371" height="529" viewBox="668 1400 2371 529">
 <defs><filter id="b1" color-interpolation-filters="sRGB" x="-10%" y="-10%" width="120%" height="120%"><feGaussianBlur stdDeviation="1.200"/></filter></defs>
 <g fill="none" filter="url(#b1)">
  <g id="joy">
   <circle cx="980" cy="1691.500" r="219.500" stroke="#232323" stroke-width="2.200"/>
   <circle cx="980" cy="1691.500" r="214.300" stroke="#1f1f1f" stroke-width="2"/>
   <circle cx="980" cy="1691.500" r="203" stroke="#070707" stroke-width="7"/>
   <circle cx="980" cy="1691.500" r="107" stroke="#3a3a3a" stroke-width="4.800"/>
   <circle cx="980" cy="1691.500" r="101.500" stroke="#141414" stroke-width="6"/>
  </g>
  <use href="#joy" x="1746"/>
 </g>
</svg>
<!-- ===== light beam + hourglass ===== -->
<svg style="left:2380px;top:480px" width="340" height="700" viewBox="2380 480 340 700">
 <defs>
  <filter id="bb" color-interpolation-filters="sRGB" x="-30%" y="-10%" width="160%" height="120%"><feGaussianBlur stdDeviation="4.200"/></filter>
  <filter id="b2" color-interpolation-filters="sRGB" x="-30%" y="-30%" width="160%" height="160%"><feGaussianBlur stdDeviation="1.200"/></filter>
  <filter id="b3" color-interpolation-filters="sRGB" x="-30%" y="-60%" width="160%" height="220%"><feGaussianBlur stdDeviation="2.200"/></filter>
  <filter id="b05" color-interpolation-filters="sRGB" x="-10%" y="-10%" width="120%" height="120%"><feGaussianBlur stdDeviation=".600"/></filter>
  <linearGradient id="beamg" gradientUnits="userSpaceOnUse" x1="2655" y1="522" x2="2465" y2="1115">
   <stop offset="0" stop-color="#8a8a8a"/><stop offset=".04" stop-color="#b0b0b0"/><stop offset=".09" stop-color="#dadada"/><stop offset=".15" stop-color="#ececec"/><stop offset=".3" stop-color="#f0f0f0"/><stop offset=".57" stop-color="#f0f0f0"/>
   <stop offset=".68" stop-color="#c4c4c4"/><stop offset=".76" stop-color="#a0a0a0"/><stop offset=".85" stop-color="#707070"/><stop offset=".925" stop-color="#3c3c3c"/><stop offset=".97" stop-color="#141414"/><stop offset="1" stop-color="#000"/>
  </linearGradient>
  <linearGradient id="capg" gradientUnits="userSpaceOnUse" x1="2473" y1="0" x2="2600" y2="0">
   <stop offset="0" stop-color="#100a0a"/><stop offset=".1" stop-color="#242020"/><stop offset=".25" stop-color="#444242"/><stop offset=".42" stop-color="#6c6c6c"/><stop offset=".54" stop-color="#828282"/><stop offset=".66" stop-color="#5c5c5c"/><stop offset=".78" stop-color="#282626"/><stop offset=".88" stop-color="#080606"/><stop offset="1" stop-color="#000"/>
  </linearGradient>
  <linearGradient id="rimg" gradientUnits="userSpaceOnUse" x1="2469" y1="0" x2="2604" y2="0">
   <stop offset="0" stop-color="#34241e"/><stop offset=".1" stop-color="#241816"/><stop offset=".2" stop-color="#3a3432"/><stop offset=".4" stop-color="#4c4a4a"/><stop offset=".56" stop-color="#6a6664"/><stop offset=".68" stop-color="#b0a8a4"/><stop offset=".8" stop-color="#ece6e2"/><stop offset=".9" stop-color="#fbf3ee"/><stop offset=".97" stop-color="#d89878"/><stop offset="1" stop-color="#6a3a28"/>
  </linearGradient>
  <linearGradient id="postg" x1="0" y1="0" x2="1" y2="0"><stop offset="0" stop-color="#241816"/><stop offset=".3" stop-color="#70625e"/><stop offset=".55" stop-color="#5a4c4a"/><stop offset="1" stop-color="#1c1210"/></linearGradient>
  <linearGradient id="postm" x1="0" y1="0" x2="1" y2="0"><stop offset="0" stop-color="#5a5252"/><stop offset=".4" stop-color="#7a7674"/><stop offset=".55" stop-color="#2a1e1c"/><stop offset="1" stop-color="#140c0a"/></linearGradient>
  <linearGradient id="postd" x1="0" y1="0" x2="1" y2="0"><stop offset="0" stop-color="#3a2a26"/><stop offset=".3" stop-color="#2c1c18"/><stop offset="1" stop-color="#0e0806"/></linearGradient>
  <linearGradient id="postr" x1="0" y1="0" x2="1" y2="0"><stop offset="0" stop-color="#140a08"/><stop offset=".35" stop-color="#3c2a24"/><stop offset=".6" stop-color="#2c1a16"/><stop offset="1" stop-color="#120806"/></linearGradient>
  <linearGradient id="baseg" gradientUnits="userSpaceOnUse" x1="2491" y1="0" x2="2633" y2="0"><stop offset="0" stop-color="#1a0c08"/><stop offset=".25" stop-color="#3a1c12"/><stop offset=".5" stop-color="#4a2416"/><stop offset=".8" stop-color="#34180e"/><stop offset="1" stop-color="#160a06"/></linearGradient>
  <linearGradient id="bulbU" gradientUnits="userSpaceOnUse" x1="2502" y1="900" x2="2576" y2="985"><stop offset="0" stop-color="#dadada"/><stop offset=".5" stop-color="#cacaca"/><stop offset="1" stop-color="#b4b4b4"/></linearGradient>
  <linearGradient id="bulbL" gradientUnits="userSpaceOnUse" x1="2518" y1="1070" x2="2588" y2="1015"><stop offset="0" stop-color="#606060"/><stop offset=".4" stop-color="#9c9c9c"/><stop offset=".75" stop-color="#cfcfcc"/><stop offset="1" stop-color="#deded8"/></linearGradient>
 </defs>
 <!-- beam -->
 <g filter="url(#bb)">
  <path d="M2655.500 521.500 C2661 522.500 2662.500 531 2660.5 541.0 L2656.0 555.0 L2650.5 574.0 L2645.1 592.0 L2639.5 611.0 L2634.5 630.0 L2629.5 650.0 L2617.5 700.0 L2606.5 750.0 L2592.5 800.0 L2582.5 850.0 L2562.5 930.0 L2541.5 990.0 L2518.5 1060.0 L2496.5 1130.0 L2422.0 1122.0 C2426 1090 2437.0 1050.0 2445.5 1030.0 L2469.5 940.0 L2502.5 850.0 L2520.5 800.0 L2543.5 750.0 L2565.5 700.0 L2589.5 650.0 L2601.0 629.0 L2609.5 611.0 L2618.0 592.0 L2627.0 574.0 L2635.5 555.5 L2642.0 541.5 C2646 529 2650 521 2655.500 521.500 Z" fill="url(#beamg)"/>
 </g>
 <ellipse cx="2648.500" cy="539" rx="16" ry="21" fill="#000" opacity=".24" filter="url(#b05)" transform="rotate(19 2648.500 539)"/>
 <path d="M2497 906 L2582 898 L2570 960 L2552 1000 L2536 1082 L2512 1084 Z" fill="#000" opacity=".42" filter="url(#b3)"/>
 <!-- back-right post -->
 <path d="M2572.200 905.200 L2584.100 902.300 L2595 986.300 L2597 1000 L2605.800 1070.300 L2593 1073 L2584 1002 L2583 990 Z" fill="url(#postr)"/>
 <ellipse cx="2589.800" cy="995" rx="8" ry="6.500" fill="#2e1e1a"/>
 <ellipse cx="2588.500" cy="993.500" rx="4" ry="3" fill="#4a3832" filter="url(#b05)"/>
 <!-- left post -->
 <path d="M2487.200 916.100 L2499.100 914.100 L2507 996.200 L2510.900 1012 L2512.900 1079 L2503 1083 L2496.100 1010 L2495.100 998.200 Z" fill="url(#postg)"/>
 <ellipse cx="2502.200" cy="1003.500" rx="8.300" ry="6.300" fill="#4e403e"/>
 <ellipse cx="2500.500" cy="1002" rx="4" ry="3" fill="#7a6e6a" filter="url(#b05)"/>
 <path d="M2494.500 999 Q2502 1002 2509.500 998" stroke="#1e1412" stroke-width="1.200" fill="none"/>
 <path d="M2495 1009 Q2503 1012 2510.500 1008" stroke="#1e1412" stroke-width="1.200" fill="none"/>
 <!-- glass bulbs -->
 <path d="M2512.900 903.300 Q2530 893 2548.500 895 Q2562 896 2567.300 903.300 Q2573.200 913.200 2576.200 929 Q2576 940 2572.200 946.800 L2562.400 966.500 L2551.500 986.300 L2540.600 986.300 L2530.700 974.400 Q2518 965 2512.900 958.600 Q2504 950 2503 942.800 Q2500 934 2502 925 Q2504 910 2512.900 903.300 Z" fill="url(#bulbU)"/>
 <ellipse cx="2546" cy="899.500" rx="20" ry="5.500" fill="#f2f2f2" transform="rotate(-7 2546 899.500)"/>
 <path d="M2516 945 L2526 940 L2522 962 Z M2552 935 L2566 930 L2560 958 L2550 965 Z" fill="#bcbcbc" opacity=".7"/>
 <path d="M2540.600 990.300 L2551.500 990.300 L2558.400 1004.100 L2576.200 1017.900 L2588 1037.700 L2591 1049.600 L2589 1059.500 L2584.100 1074 L2527.800 1078 L2516.900 1059.500 L2513.900 1047.600 L2518.900 1029.800 L2530.700 1008 Z" fill="#8a8a8a" opacity=".55"/>
 <path d="M2527 1015 Q2549 1005 2572 1014.500 L2576.200 1017.900 L2588 1037.700 L2591 1049.600 L2589 1059.500 L2584.100 1074 L2527.800 1078 L2516.900 1059.500 L2513.900 1047.600 L2518.900 1029.800 Z" fill="url(#bulbL)"/>
 <path d="M2527 1015 Q2549 1005.500 2572 1014.500 Q2549 1013 2527 1015 Z" fill="#ececec"/>
 <path d="M2527 1015 L2518.900 1029.800 L2513.900 1047.600 L2516.900 1059.500 L2527.800 1078" fill="none" stroke="#f4f4f4" stroke-width="1.500"/>
 <path d="M2576.200 1017.900 L2588 1037.700 L2591 1049.600 L2589 1059.500 L2584.100 1074" fill="none" stroke="#e2e2e2" stroke-width="1.200"/>
 <!-- middle post -->
 <path d="M2539.600 990 L2556.400 988 L2563.300 1075 L2548.500 1077.300 Z" fill="url(#postd)"/>
 <path d="M2537.600 976.400 L2551.500 972.500 L2553.500 981 L2556.400 988.500 L2539.600 991 L2540.500 983 Z" fill="#22140f"/>
 <ellipse cx="2545.600" cy="982.800" rx="7.600" ry="5.400" fill="#2e201c"/>
 <ellipse cx="2544" cy="981.500" rx="3.500" ry="2.400" fill="#56443e" filter="url(#b05)"/>
 <!-- base -->
 <g transform="rotate(-2.400 2562 1100)">
  <ellipse cx="2562" cy="1100" rx="71" ry="27" fill="url(#baseg)"/>
  <ellipse cx="2560" cy="1089" rx="63" ry="15.500" fill="#180b07" filter="url(#b2)"/>
  <path d="M2493 1096 Q2500 1078 2562 1073.500" fill="none" stroke="#5c4c48" stroke-width="1.600" opacity=".8" filter="url(#b05)"/>
  <ellipse cx="2563" cy="1105" rx="34" ry="3.600" fill="#e8c8b8" filter="url(#b3)"/>
  <ellipse cx="2563" cy="1104.500" rx="20" ry="1.700" fill="#ffffff" filter="url(#b2)"/>
 </g>
 <!-- top cap (seen from below) -->
 <g transform="rotate(-7.600 2536 885)">
  <clipPath id="capclip"><ellipse cx="2536" cy="887" rx="67.500" ry="31.500"/></clipPath>
  <ellipse cx="2536" cy="887" rx="67.500" ry="31.500" fill="url(#rimg)"/>
  <g clip-path="url(#capclip)"><ellipse cx="2586" cy="905" rx="20" ry="7" fill="#e09468" opacity=".5" filter="url(#b3)" transform="rotate(-24 2586 905)"/></g>
  <ellipse cx="2536.500" cy="876.500" rx="63.500" ry="19.500" fill="url(#capg)"/>
  <g clip-path="url(#capclip)"><path d="M2471.500 889 Q2477 869 2506 861.500 Q2531 856.800 2558 858" fill="none" stroke="#f4efec" stroke-width="6" opacity=".85" filter="url(#b2)"/></g>
  <path d="M2500 893 Q2536 899 2576 891.500 Q2592 887 2598 878" fill="none" stroke="#b4b0ae" stroke-width="1.300" opacity=".55" filter="url(#b05)"/>
  <path d="M2518 862 L2530 894 M2534 859 L2546 893 M2550 858 L2561 890" stroke="#d0d0d0" stroke-width="3.500" opacity=".13" filter="url(#b2)"/>
 </g>
 <path d="M2530.700 887.400 L2542.800 885.400 L2551.500 972.500 L2537.600 976.400 Z" fill="url(#postm)"/>
 <path d="M2542.200 886 L2543.400 885.800 L2552 972 L2550.600 972.500 Z" fill="#d8d8d8" opacity=".8"/>
 <path d="M2537.600 976.400 L2551.500 972.500 L2553.500 981 L2540.500 983 Z" fill="#22140f"/>
 <ellipse cx="2545.600" cy="982.800" rx="7.600" ry="5.400" fill="#2e201c"/>
 <ellipse cx="2544" cy="981.500" rx="3.500" ry="2.400" fill="#56443e" filter="url(#b05)"/>
</svg>
<div class="t" id="m1" style="left:94.13px;top:7.58px;font-size:24px;color:#c0c0c0;transform:scaleX(0.9833)">File</div>
<div class="t" id="m2" style="left:173.24px;top:7.58px;font-size:24px;color:#c0c0c0;transform:scaleX(0.9795)">Edit</div>
<div class="t" id="m3" style="left:256.40px;top:7.58px;font-size:24px;color:#c0c0c0;transform:scaleX(0.9465)">Window</div>
<div class="t" id="m4" style="left:380.30px;top:7.58px;font-size:24px;color:#c0c0c0;transform:scaleX(1.0182)">Tools</div>
<div class="t" id="m5" style="left:478.26px;top:7.58px;font-size:24px;color:#c0c0c0;transform:scaleX(1.0220)">Build</div>
<div class="t" id="m6" style="left:574.05px;top:7.58px;font-size:24px;color:#c0c0c0;transform:scaleX(0.9455)">Select</div>
<div class="t" id="m7" style="left:680.60px;top:7.58px;font-size:24px;color:#c0c0c0;transform:scaleX(0.9839)">Actor</div>
<div class="t" id="m8" style="left:777.37px;top:7.58px;font-size:24px;color:#c0c0c0;transform:scaleX(0.9638)">Help</div>
<div class="t" id="main" style="left:148.87px;top:57.78px;font-size:24px;color:#ffffff;transform:scaleX(1.0169)">Main*</div>
<div class="t" id="selmode" style="left:226.83px;top:119.78px;font-size:24px;color:#c0c0c0;transform:scaleX(0.9689)">Selection Mode</div>
<div class="t" id="pa" style="left:31.21px;top:186.08px;font-size:24px;color:#c8c8c8;transform:scaleX(0.9954)">Place Actors</div>
<div class="t" id="search" style="left:47.25px;top:242.08px;font-size:24px;color:#606060;transform:scaleX(0.9524)">Search Classes</div>
<div class="t" id="basich" style="left:110.09px;top:304.58px;font-size:24px;color:#c0c0c0;transform:scaleX(1.0071)">Basic</div>
<div class="t" id="i1" style="left:174.30px;top:366.28px;font-size:24px;color:#f0f0f0;transform:scaleX(0.9893)">Actor</div>
<div class="t" id="i2" style="left:173.02px;top:422.28px;font-size:24px;color:#f0f0f0;transform:scaleX(0.9877)">Pawn</div>
<div class="t" id="i3" style="left:173.12px;top:478.28px;font-size:24px;color:#f0f0f0;transform:scaleX(0.9878)">Player Start</div>
<div class="t" id="i4" style="left:174.50px;top:534.28px;font-size:24px;color:#f0f0f0;transform:scaleX(0.9494)">Trigger Sphere</div>
<div class="t" id="i5" style="left:438.73px;top:366.28px;font-size:24px;color:#f0f0f0;transform:scaleX(0.9712)">Character</div>
<div class="t" id="i6" style="left:438.49px;top:422.28px;font-size:24px;color:#f0f0f0;transform:scaleX(1.0045)">Point Light</div>
<div class="t" id="i7" style="left:439.30px;top:478.28px;font-size:24px;color:#f0f0f0;transform:scaleX(0.9545)">Trigger Box</div>
<div class="t" id="c1" style="left:1.00px;top:368.76px;font-size:18px;color:#c0c0c0;letter-spacing:0.688px">Favorites</div>
<div class="t" id="c2" style="left:12.00px;top:472.76px;font-size:18px;color:#c0c0c0;letter-spacing:0.400px">Recent</div>
<div class="t" id="c3" style="left:18.30px;top:576.76px;font-size:18px;color:#ffffff;letter-spacing:0.475px">Basic</div>
<div class="t" id="c4" style="left:15.10px;top:681.46px;font-size:18px;color:#c0c0c0;letter-spacing:0.940px">Lights</div>
<div class="t" id="c5" style="left:21.90px;top:785.66px;font-size:18px;color:#c0c0c0;letter-spacing:0.633px">Cine</div>
<div class="t" id="c6" style="left:8.80px;top:889.56px;font-size:18px;color:#c0c0c0;letter-spacing:0.580px">Shapes</div>
<div class="t" id="c7" style="left:28.90px;top:986.66px;font-size:18px;color:#c0c0c0;transform:scaleX(1.0174)">VP</div>
<div class="t" id="c8" style="left:15.10px;top:1084.76px;font-size:18px;color:#c0c0c0;letter-spacing:1.025px">Media</div>
<div class="t" id="c9" style="left:24.70px;top:1188.96px;font-size:18px;color:#c0c0c0;transform:scaleX(0.9343)">VFX</div>
<div class="t" id="c10" style="left:-1.20px;top:1292.36px;font-size:18px;color:#c0c0c0;letter-spacing:0.686px">Geometry</div>
<div class="t" id="c11" style="left:15.10px;top:1389.76px;font-size:18px;color:#c0c0c0;letter-spacing:1.025px">Media</div>
<div class="t" id="c12" style="left:3.90px;top:1494.56px;font-size:18px;color:#c0c0c0;letter-spacing:0.967px">Volumes</div>
<div class="t" id="c13" style="left:30.80px;top:1599.26px;font-size:18px;color:#c0c0c0;letter-spacing:1.150px">All</div>
<div class="t" id="ps" style="left:1375.83px;top:119.78px;font-size:24px;color:#c0c0c0;transform:scaleX(0.9855)">Pixel Streaming</div>
<div class="t" id="vpr" style="left:1662.50px;top:119.78px;font-size:24px;color:#c0c0c0;transform:scaleX(0.9354)">VP Roles</div>
<div class="t" id="shift" style="left:723.76px;top:196.12px;font-size:21px;color:#ffffff;font-weight:700;transform:scaleX(0.9365)">Shift+F1 for Mouse Cursor</div>
<div class="t" id="lit" style="left:2728.70px;top:194.23px;font-size:23px;color:#c0c0c0;letter-spacing:1.400px">Lit</div>
<div class="t" id="red" style="left:737.25px;top:314.23px;font-size:23px;color:#ff0000;transform:scaleX(0.9751)">LIGHTING NEEDS TO BE REBUILT (6 unbuilt objects)</div>
<div class="t" id="wht" style="left:737.50px;top:349.13px;font-size:23px;color:#ffffff;letter-spacing:0.333px">Run console command &#x27;DumpUnbuiltLightInteractions&#x27; to see what is unbuilt</div>
<div class="t" id="dim" style="left:825.38px;top:384.33px;font-size:23px;color:#0d0d0d;transform:scaleX(1.0153)">&#x27;DisableAllScreenMessages&#x27; to suppress</div>
</body>
</html>
